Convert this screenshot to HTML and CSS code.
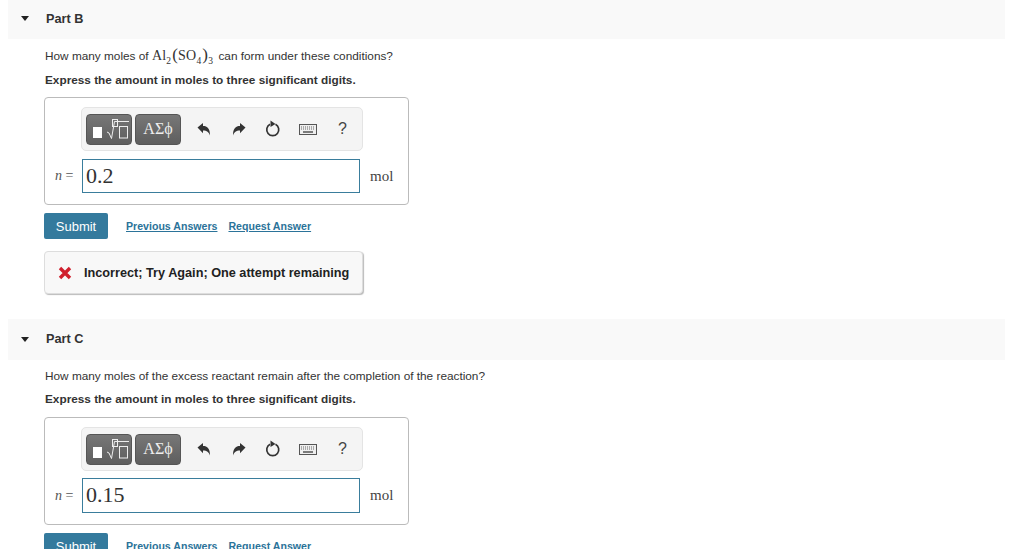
FILE: index.html
```html
<html>

<head>
	<title>Parts B and C</title>
	<link rel="stylesheet" href="styles.css">
</head>

<body>
	<div id="pageContent">
		<div class="partHeader partB">
			<span class="caret"></span>
			<h3>Part B</h3>
		</div>
		<div class="partBody">
			<p class="question questionB">How many moles of
				<span class="math formula">Al<sub>2</sub><span class="paren">(</span>SO<sub>4</sub><span class="paren">)</span><sub>3</sub></span>
				can form under these conditions?</p>
			<p class="instruction instructionB">Express the amount in moles to three significant digits.</p>
			<div class="answerBox answerBoxB">
				<div class="toolbar">
					<button class="toolBtn templates" type="button">
						<svg width="44" height="29" viewBox="0 0 44 29">
							<rect x="6" y="12" width="9" height="11" fill="#fff" />
							<rect x="25.500" y="4.500" width="5" height="7" fill="none" stroke="#eee" />
							<path d="M20 17l2 1 2.500 5.500 3-17h14.500" fill="none" stroke="#eee" />
							<rect x="32.500" y="11.500" width="8" height="11.500" fill="none" stroke="#eee" />
						</svg>
					</button>
					<button class="toolBtn symbols" type="button">ΑΣϕ</button>
					<svg class="icon undo" width="14" height="15" viewBox="0 0 14 15">
						<path d="M0.500 5.500L6 1v3c4.500 0 7 2.500 7 9.500-1.200-3.500-3-5-7-5v2.800z" fill="#333" />
					</svg>
					<svg class="icon redo" width="14" height="15" viewBox="0 0 14 15">
						<path d="M13.500 5.500L8 1v3c-4.500 0-7 2.500-7 9.500 1.200-3.500 3-5 7-5v2.800z" fill="#333" />
					</svg>
					<svg class="icon reset" width="16" height="18" viewBox="0 0 16 18">
						<path d="M5 4.300a6 6 0 1 0 5.500 0" fill="none" stroke="#333" stroke-width="1.700" />
						<path d="M5.500 0.500l5 3.500-5 3z" fill="#333" />
					</svg>
					<svg class="icon keyboard" width="18" height="11" viewBox="0 0 18 11">
						<rect x="0.500" y="0.500" width="17" height="10" fill="#eee" stroke="#555" />
						<path d="M2 3h14M2 5h14" stroke="#666" stroke-dasharray="1 1" />
						<path d="M4 8h10" stroke="#555" stroke-width="1.500" />
					</svg>
					<span class="help">?</span>
				</div>
				<div class="answerRow">
					<label class="varName"><i>n</i> =</label>
					<div class="answerInput">0.2</div>
					<span class="unit">mol</span>
				</div>
			</div>
			<div class="actions">
				<button class="submitBtn" type="button">Submit</button>
				<a class="actionLink" href="#">Previous Answers</a>
				<a class="actionLink" href="#">Request Answer</a>
			</div>
			<div class="feedback">
				<svg class="wrongIcon" width="14" height="14" viewBox="0 0 14 14">
					<path d="M2 2l10 10M12 2L2 12" stroke="#d0202e" stroke-width="3.400" />
				</svg>
				<span>Incorrect; Try Again; One attempt remaining</span>
			</div>
		</div>

		<div class="partHeader partC">
			<span class="caret"></span>
			<h3>Part C</h3>
		</div>
		<div class="partBody">
			<p class="question questionC">How many moles of the excess reactant remain after the completion of the reaction?</p>
			<p class="instruction instructionC">Express the amount in moles to three significant digits.</p>
			<div class="answerBox answerBoxC">
				<div class="toolbar">
					<button class="toolBtn templates" type="button">
						<svg width="44" height="29" viewBox="0 0 44 29">
							<rect x="6" y="12" width="9" height="11" fill="#fff" />
							<rect x="25.500" y="4.500" width="5" height="7" fill="none" stroke="#eee" />
							<path d="M20 17l2 1 2.500 5.500 3-17h14.500" fill="none" stroke="#eee" />
							<rect x="32.500" y="11.500" width="8" height="11.500" fill="none" stroke="#eee" />
						</svg>
					</button>
					<button class="toolBtn symbols" type="button">ΑΣϕ</button>
					<svg class="icon undo" width="14" height="15" viewBox="0 0 14 15">
						<path d="M0.500 5.500L6 1v3c4.500 0 7 2.500 7 9.500-1.200-3.500-3-5-7-5v2.800z" fill="#333" />
					</svg>
					<svg class="icon redo" width="14" height="15" viewBox="0 0 14 15">
						<path d="M13.500 5.500L8 1v3c-4.500 0-7 2.500-7 9.500 1.200-3.500 3-5 7-5v2.800z" fill="#333" />
					</svg>
					<svg class="icon reset" width="16" height="18" viewBox="0 0 16 18">
						<path d="M5 4.300a6 6 0 1 0 5.500 0" fill="none" stroke="#333" stroke-width="1.700" />
						<path d="M5.500 0.500l5 3.500-5 3z" fill="#333" />
					</svg>
					<svg class="icon keyboard" width="18" height="11" viewBox="0 0 18 11">
						<rect x="0.500" y="0.500" width="17" height="10" fill="#eee" stroke="#555" />
						<path d="M2 3h14M2 5h14" stroke="#666" stroke-dasharray="1 1" />
						<path d="M4 8h10" stroke="#555" stroke-width="1.500" />
					</svg>
					<span class="help">?</span>
				</div>
				<div class="answerRow answerRowC">
					<label class="varName"><i>n</i> =</label>
					<div class="answerInput answerInputC">0.15</div>
					<span class="unit">mol</span>
				</div>
			</div>
			<div class="actions">
				<button class="submitBtn" type="button">Submit</button>
				<a class="actionLink" href="#">Previous Answers</a>
				<a class="actionLink" href="#">Request Answer</a>
			</div>
		</div>
	</div>
</body>

</html>
```

FILE: styles.css
```css
html,
body {
	margin: 0;
	padding: 0;
	height: 549px;
	overflow: hidden;
	background: #fff;
}

body {
	font-family: "Liberation Sans", Arial, sans-serif;
	font-size: 11.800px;
	color: #333;
}

#pageContent {
	width: 997px;
	margin-left: 8px;
}

.partHeader {
	display: flex;
	align-items: center;
	background: #f9f9f9;
	padding-left: 13px;
}

.partB {
	height: 39px;
	padding-bottom: 2px;
	box-sizing: border-box;
}

.partC {
	height: 41px;
	margin-top: 25px;
	padding-bottom: 1px;
	box-sizing: border-box;
}

.partHeader h3 {
	margin: 0 0 0 17px;
	font-size: 12.700px;
	line-height: 14px;
	font-weight: bold;
	color: #333;
}

.caret {
	width: 0;
	height: 0;
	border-left: 4.500px solid transparent;
	border-right: 4.500px solid transparent;
	border-top: 5px solid #222;
}

.partBody {
	padding-left: 36px;
}

.question {
	margin: 0;
	padding-left: 1px;
	line-height: 16px;
}

.questionB {
	padding-top: 9px;
}

.questionC {
	padding-top: 8px;
}

.math,
.unit,
.varName,
.answerInput,
.symbols {
	font-family: "Liberation Serif", "Times New Roman", serif;
}

.formula {
	font-size: 14px;
	letter-spacing: 0.200px;
	margin: 0 2px 0 0;
}

.formula sub {
	font-size: 9.500px;
	line-height: 0;
}

.paren {
	font-size: 17px;
	line-height: 0;
	margin-left: 1px;
}

.instruction {
	margin: 0;
	padding-left: 1px;
	font-weight: bold;
	line-height: 14px;
}

.instructionB {
	margin-top: 9px;
}

.instructionC {
	margin-top: 8px;
}

.answerBox {
	box-sizing: border-box;
	width: 365px;
	height: 108px;
	padding: 9px 0 0 36px;
	border: 1px solid #bbb;
	border-radius: 4px;
}

.answerBoxB {
	margin-top: 10px;
}

.answerBoxC {
	margin-top: 11px;
}

.toolbar {
	box-sizing: border-box;
	display: flex;
	align-items: center;
	width: 282px;
	height: 44px;
	padding-left: 4px;
	background: #f4f4f4;
	border: 1px solid #e4e4e4;
	border-radius: 5px;
}

.toolBtn {
	box-sizing: border-box;
	height: 31px;
	padding: 0;
	margin-right: 3px;
	color: #eee;
	background: linear-gradient(#777, #5e5e5e);
	border: 1px solid #555;
	border-radius: 4px;
}

.templates {
	width: 46px;
}

.templates svg {
	display: block;
}

.symbols {
	width: 46px;
	font-size: 16px;
}

.icon {
	flex: none;
}

.undo {
	margin-left: 13px;
}

.redo {
	margin-left: 21px;
}

.reset {
	margin-left: 19px;
}

.keyboard {
	margin-left: 18px;
}

.help {
	margin-left: 21px;
	font-size: 16px;
	color: #444;
}

.answerRow {
	display: flex;
	align-items: center;
	margin-top: 8px;
	margin-left: -26px;
}

.answerRowC {
	margin-top: 7px;
}

.varName {
	width: 27px;
	font-size: 14px;
	white-space: nowrap;
	color: #555;
}

.answerInput {
	box-sizing: border-box;
	width: 277.500px;
	height: 34px;
	padding-left: 3px;
	font-size: 22px;
	line-height: 32px;
	color: #333;
	border: 1px solid #3a7d9c;
}

.answerInputC {
	height: 35px;
}

.unit {
	margin-left: 10.500px;
	font-size: 15px;
	color: #444;
}

.actions {
	display: flex;
	align-items: center;
	margin-top: 8px;
}

.submitBtn {
	box-sizing: border-box;
	width: 64px;
	height: 26px;
	padding: 0;
	font-family: "Liberation Sans", Arial, sans-serif;
	font-size: 13px;
	color: #fff;
	background: #347a9d;
	border: none;
	border-radius: 2px;
	margin-right: 18px;
}

.actionLink {
	margin-right: 11px;
	font-size: 10.600px;
	font-weight: bold;
	color: #2b7399;
	text-decoration: underline;
}

.feedback {
	box-sizing: border-box;
	display: flex;
	align-items: center;
	width: 319px;
	height: 43px;
	margin-top: 12px;
	padding-left: 13px;
	font-size: 12.700px;
	font-weight: bold;
	color: #222;
	background: #f8f8f8;
	border: 1px solid #ddd;
	border-radius: 4px;
	box-shadow: 1px 1px 1px #bbb;
}

.wrongIcon {
	margin-right: 12px;
}
```
